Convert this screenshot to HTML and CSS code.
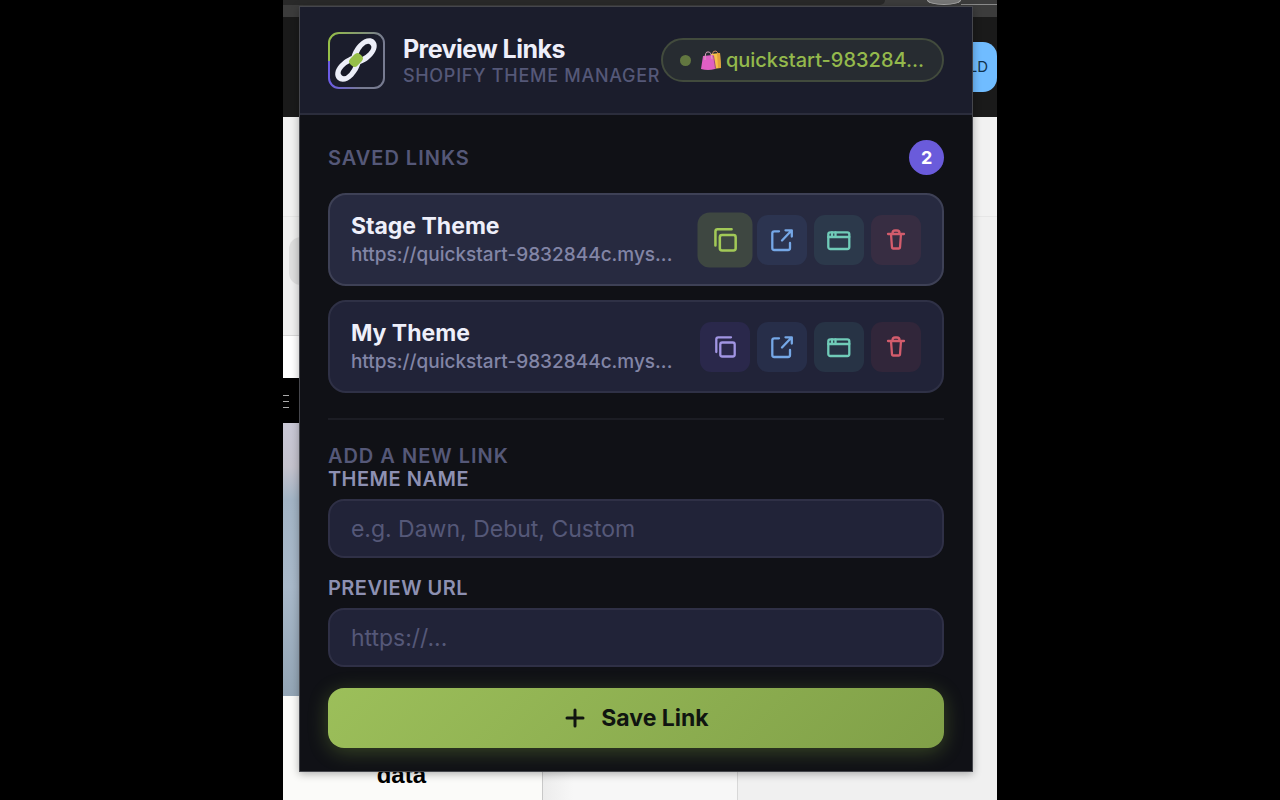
FILE: index.html
```html
<!DOCTYPE html>
<html lang="en">
<head>
    <meta charset="UTF-8">
    <meta name="viewport" content="width=device-width, initial-scale=1.0">
    <title>Preview Links</title>
    <link rel="stylesheet" href="styles.css">
</head>
<body>

    <div class="stage">
        <!-- Browser and page behind the popup -->
        <div class="browser">
            <div class="address-bar"></div>
            <span class="avatar"></span>
            <span class="edge"></span>
        </div>
        <div class="topbar"><span class="tag">LD</span></div>
        <div class="page">
            <div class="page-bar"></div>
            <div class="page-tools"><span class="tool"></span></div>
            <div class="columns">
                <div class="preview">
                    <div class="blank"></div>
                    <div class="preview-nav">
                        <svg width="8" height="16" viewBox="0 0 8 16" stroke="#aaa" stroke-width="1"><path d="M0 2.5h6M0 8.5h6M0 14.5h6"/></svg>
                    </div>
                    <div class="photo"></div>
                    <div class="caption">data</div>
                </div>
                <div class="gutter"></div>
                <div class="sidebar"></div>
            </div>
        </div>

        <main class="popup">
            <header class="header">
                <svg class="logo" viewBox="0 0 57 57" fill="none">
                    <defs>
                        <linearGradient id="edge" x1="0" y1="0" x2="1" y2="0">
                            <stop offset="0" stop-color="#96bf48"/>
                            <stop offset="1" stop-color="#777b91"/>
                        </linearGradient>
                        <linearGradient id="edge-low" x1="0" y1="0" x2="1" y2="0">
                            <stop offset="0" stop-color="#6c5ce7"/>
                            <stop offset="0.6" stop-color="#777b91"/>
                        </linearGradient>
                    </defs>
                    <path d="M1 29V11A10 10 0 0 1 11 1H46A10 10 0 0 1 56 11V29" stroke="url(#edge)" stroke-width="2"/>
                    <path d="M1 29V46A10 10 0 0 0 11 56H46A10 10 0 0 0 56 46V29" stroke="url(#edge-low)" stroke-width="2"/>
                    <g transform="translate(28 28) rotate(-47)">
                        <path d="M0 -6C5 -8 8 -9 14 -9C22 -9 27 -5 27 0C27 5 22 9 14 9C8 9 5 8 0 6C-5 8 -8 9 -14 9C-22 9 -27 5 -27 0C-27 -5 -22 -9 -14 -9C-8 -9 -5 -8 0 -6Z" fill="#eceef8"/>
                        <path d="M5 -2Q10 -4 14 -4Q21 -4 21 0Q21 4 14 4Q10 4 5 2Z" fill="#171927"/>
                        <path d="M-5 -2Q-10 -4 -14 -4Q-21 -4 -21 0Q-21 4 -14 4Q-10 4 -5 2Z" fill="#171927"/>
                        <rect x="-7" y="-5" width="14" height="10" rx="4" fill="#96bf48"/>
                    </g>
                </svg>
                <div class="brand">
                    <h1>Preview Links</h1>
                    <p>Shopify Theme Manager</p>
                </div>
                <div class="store">
                    <span class="dot"></span>
                    <svg class="bags" viewBox="0 0 22 22" fill="none">
                        <path d="M12 6Q13 1 16 2Q18 3 18 6" stroke="#c98a62" stroke-width="1"/>
                        <path d="M11 5L20 4L21 19L12 20Z" fill="#f5c04a"/>
                        <path d="M17 4L20 4L21 19L18 19Z" fill="#e3a13c"/>
                        <path d="M3 7L13 6L15 20Q8 22 1 20Z" fill="#e05fc4"/>
                        <path d="M13 6L14 7L16 19L15 20Z" fill="#a33c92"/>
                        <path d="M5 11Q5 2 8 3Q11 2 12 10" stroke="#d9a4bd" stroke-width="1"/>
                    </svg>
                    <span class="store-name">quickstart-983284...</span>
                </div>
            </header>

            <section class="content">
                <div class="section-head">
                    <h2>Saved Links</h2>
                    <span class="count">2</span>
                </div>

                <ul class="links">
                    <li class="card active">
                        <div class="info">
                            <h3>Stage Theme</h3>
                            <p>https://quickstart-9832844c.mys...</p>
                        </div>
                        <div class="actions">
                            <button class="action copy" type="button" aria-label="Copy link"><svg viewBox="0 0 24 24"><use href="#i-copy"/></svg></button>
                            <button class="action open" type="button" aria-label="Open in tab"><svg viewBox="0 0 24 24"><use href="#i-open"/></svg></button>
                            <button class="action window" type="button" aria-label="Open in window"><svg viewBox="0 0 24 24"><use href="#i-window"/></svg></button>
                            <button class="action delete" type="button" aria-label="Delete link"><svg viewBox="0 0 24 24"><use href="#i-trash"/></svg></button>
                        </div>
                    </li>
                    <li class="card">
                        <div class="info">
                            <h3>My Theme</h3>
                            <p>https://quickstart-9832844c.mys...</p>
                        </div>
                        <div class="actions">
                            <button class="action copy" type="button" aria-label="Copy link"><svg viewBox="0 0 24 24"><use href="#i-copy"/></svg></button>
                            <button class="action open" type="button" aria-label="Open in tab"><svg viewBox="0 0 24 24"><use href="#i-open"/></svg></button>
                            <button class="action window" type="button" aria-label="Open in window"><svg viewBox="0 0 24 24"><use href="#i-window"/></svg></button>
                            <button class="action delete" type="button" aria-label="Delete link"><svg viewBox="0 0 24 24"><use href="#i-trash"/></svg></button>
                        </div>
                    </li>
                </ul>

                <form class="add-form">
                    <h2>Add a New Link</h2>
                    <label for="theme-name">Theme Name</label>
                    <input type="text" id="theme-name" placeholder="e.g. Dawn, Debut, Custom">
                    <label for="preview-url">Preview URL</label>
                    <input type="text" id="preview-url" placeholder="https://...">
                    <button class="save" type="button">
                        <svg viewBox="0 0 24 24" fill="none" stroke="currentColor" stroke-width="3" stroke-linecap="round"><path d="M12 4v16M4 12h16"/></svg>
                        Save Link
                    </button>
                </form>
            </section>
        </main>
    </div>

    <svg class="sprite" aria-hidden="true">
        <symbol id="i-copy" viewBox="0 0 24 24">
            <rect x="7.3" y="7.5" width="14.400" height="14" rx="2"/>
            <path d="M3.3 17V4.300Q3.300 2.300 5.300 2.300H18"/>
        </symbol>
        <symbol id="i-open" viewBox="0 0 24 24">
            <path d="M9 3.300H4.300Q2.300 3.300 2.300 5.300V20Q2.300 22 4.300 22H18Q20 22 20 20V15M12 12.500L21.500 2.500M15.500 2.300H21.800V8.500"/>
        </symbol>
        <symbol id="i-window" viewBox="0 0 24 24">
            <rect x="1.3" y="4.3" width="21" height="16.700" rx="2"/>
            <path d="M1.300 9H22.300M5 4.300V9M8.500 4.300V9"/>
        </symbol>
        <symbol id="i-trash" viewBox="0 0 24 24">
            <path d="M4 6H20M7 6L8 19.500Q8 20.500 9 20.500H15Q16 20.500 16 19.500L17 6M8.500 6V5Q8.500 2.500 11 2.500H13Q15.500 2.500 15.500 5V6"/>
        </symbol>
    </svg>

</body>
</html>
```
FILE: styles.css
```css
* {
    box-sizing: border-box;
}
body {
    margin: 0;
    background: #000;
    font-family: Inter, "Liberation Sans", sans-serif;
}
h1, h2, h3, p, ul {
    margin: 0;
    padding: 0;
}
.sprite {
    position: absolute;
    width: 0;
    height: 0;
}
.stage {
    position: relative;
    display: flex;
    flex-direction: column;
    width: 55.8%;
    min-width: 700px;
    min-height: 100vh;
    margin: 0 auto;
    overflow: hidden;
}

/* backdrop */
.browser {
    display: flex;
    height: 17px;
    background: #3c3c3c;
    overflow: hidden;
}
.address-bar {
    flex: 1;
    height: 5px;
    margin-right: 42px;
    background: #292929;
    border-radius: 0 0 12px 0;
}
.avatar {
    width: 34px;
    height: 5px;
    background: #777;
    border: 1px solid #aaa;
    border-top: 0;
    border-radius: 0 0 50% 50% / 0 0 100% 100%;
}
.edge {
    width: 36px;
    height: 5px;
    border-bottom: 1px solid #8a8a8a;
}
.topbar {
    display: flex;
    justify-content: flex-end;
    align-items: center;
    height: 100px;
    background: #1a1a1a;
}
.tag {
    padding: 0 9px;
    width: 80px;
    line-height: 50px;
    font-size: 15px;
    text-align: right;
    color: #10324c;
    background: #70bcff;
    border-radius: 14px;
}
.page {
    flex: 1;
    display: flex;
    flex-direction: column;
    background: #f0f0f0;
}
.page-bar {
    height: 100px;
    background: #f1f1f1;
    border-bottom: 1px solid #e6e6e6;
}
.page-tools {
    height: 118px;
    padding: 20px 6px;
}
.tool {
    display: block;
    width: 60px;
    height: 48px;
    background: #dedede;
    border-radius: 12px;
}
.columns {
    flex: 1;
    display: grid;
    grid-template-columns: 260px 195px 1fr;
}
.preview {
    display: flex;
    flex-direction: column;
    background: #fbfbf9;
    border-right: 1px solid #c8c8c8;
}
.blank {
    height: 43px;
    background: #fff;
    border-top: 1px solid #d8d8d8;
}
.preview-nav {
    display: flex;
    align-items: center;
    height: 45px;
    background: #000;
}
.photo {
    height: 273px;
    background: linear-gradient(#c9c8d6, #c5c3cd 16%, #a3b4c5 28%, #a9b9ca 60%, #93a5b5);
}
.caption {
    padding: 63px 22px 0 0;
    font: bold 24px/32px "Liberation Sans", sans-serif;
    text-align: center;
}
.gutter {
    background: linear-gradient(90deg, #ececec, #f7f7f7 30px);
    border-right: 1px solid #d8d8d8;
}
.sidebar {
    background: #f0f0f0;
}

/* popup */
.popup {
    position: absolute;
    top: 6px;
    left: 16px;
    right: 24px;
    background: #101116;
    border: 1px solid #45464c;
    box-shadow: 0 2px 8px rgba(0, 0, 0, 0.3);
}
.header {
    display: flex;
    align-items: center;
    height: 108px;
    padding: 0 28px;
    background: #1b1d2c;
    border-bottom: 2px solid #2b2d3c;
}
.logo {
    flex: none;
    width: 57px;
    height: 57px;
    margin-right: 18px;
}
.brand {
    flex: 1;
    white-space: nowrap;
}
.brand h1 {
    font-size: 25px;
    line-height: 32px;
    font-weight: 700;
    letter-spacing: -0.5px;
    color: #eeeffa;
}
.brand p {
    font-size: 18px;
    line-height: 22px;
    font-weight: 500;
    letter-spacing: 0.04em;
    text-transform: uppercase;
    color: #555878;
}
.store {
    display: flex;
    flex: none;
    align-items: center;
    height: 44px;
    padding: 0 18px 0 17px;
    border: 2px solid #424b3d;
    border-radius: 22px;
    background: #272c31;
    color: #94b94c;
}
.dot {
    width: 11px;
    height: 11px;
    margin-right: 9px;
    border-radius: 50%;
    background: #627740;
}
.bags {
    width: 22px;
    height: 22px;
    margin-right: 4px;
}
.store-name {
    font-size: 20px;
    font-weight: 500;
}
.content {
    padding: 25px 28px 23px;
}
h2 {
    font-size: 20px;
    line-height: 24px;
    font-weight: 600;
    letter-spacing: 1px;
    text-transform: uppercase;
    color: #555878;
}
.section-head {
    display: flex;
    justify-content: space-between;
    align-items: center;
    margin-bottom: 18px;
}
.count {
    width: 35px;
    border-radius: 50%;
    background: #6a5bdb;
    color: #fff;
    font-size: 18px;
    line-height: 35px;
    font-weight: 700;
    text-align: center;
}
.links {
    display: flex;
    flex-direction: column;
    gap: 14px;
    padding-bottom: 25px;
    border-bottom: 2px solid #1c1d24;
    list-style: none;
}
.card {
    display: flex;
    align-items: center;
    height: 93px;
    padding: 0 21px;
    border: 2px solid #2f3146;
    border-radius: 18px;
    background: #212338;
}
.card.active {
    background: #272a40;
    border-color: #3e4156;
}
.info {
    flex: 1;
    min-width: 0;
    margin-right: 20px;
}
.info h3 {
    font-size: 23px;
    line-height: 30px;
    font-weight: 650;
    color: #eeeffa;
}
.info p {
    overflow: hidden;
    font-size: 19px;
    line-height: 28px;
    font-weight: 500;
    color: #8285a6;
    text-overflow: ellipsis;
    white-space: nowrap;
}
.actions {
    display: flex;
    gap: 7px;
}
.action {
    display: flex;
    justify-content: center;
    align-items: center;
    width: 50px;
    height: 50px;
    padding: 0;
    border: 0;
    border-radius: 11px;
}
.action svg {
    width: 24px;
    height: 24px;
    fill: none;
    stroke: currentColor;
    stroke-width: 2.3;
    stroke-linecap: round;
    stroke-linejoin: round;
}
.copy {
    background: #2a284b;
    color: #a195e3;
}
.active .copy {
    background: #3e4741;
    color: #a2c957;
    transform: scale(1.1);
}
.open {
    background: #272e49;
    color: #75a7e6;
}
.window {
    background: #273345;
    color: #70cbb8;
}
.delete {
    background: #31263a;
    color: #d35c6c;
}
.active .open {
    background: #2c3450;
}
.active .window {
    background: #2c394b;
}
.active .delete {
    background: #372d42;
}
.add-form {
    display: flex;
    flex-direction: column;
    padding-top: 24px;
}
label {
    margin-bottom: 8px;
    font-size: 20px;
    line-height: 23px;
    font-weight: 600;
    letter-spacing: 0.5px;
    text-transform: uppercase;
    color: #8d90b2;
}
input {
    height: 59px;
    margin-bottom: 19px;
    padding: 0 21px;
    border: 2px solid #2f3046;
    border-radius: 16px;
    background: #212338;
    color: #eeeffa;
    font: 400 23px Inter, sans-serif;
}
input::placeholder {
    color: #555878;
}
.save {
    display: flex;
    justify-content: center;
    align-items: center;
    gap: 14px;
    height: 60px;
    margin-top: 2px;
    border: 0;
    border-radius: 16px;
    background: linear-gradient(135deg, #9cbf5a, #80a048);
    box-shadow: 0 4px 20px rgba(150, 191, 72, 0.3);
    color: #101510;
    font: 650 23px Inter, sans-serif;
}
.save svg {
    width: 24px;
    height: 24px;
}
```
